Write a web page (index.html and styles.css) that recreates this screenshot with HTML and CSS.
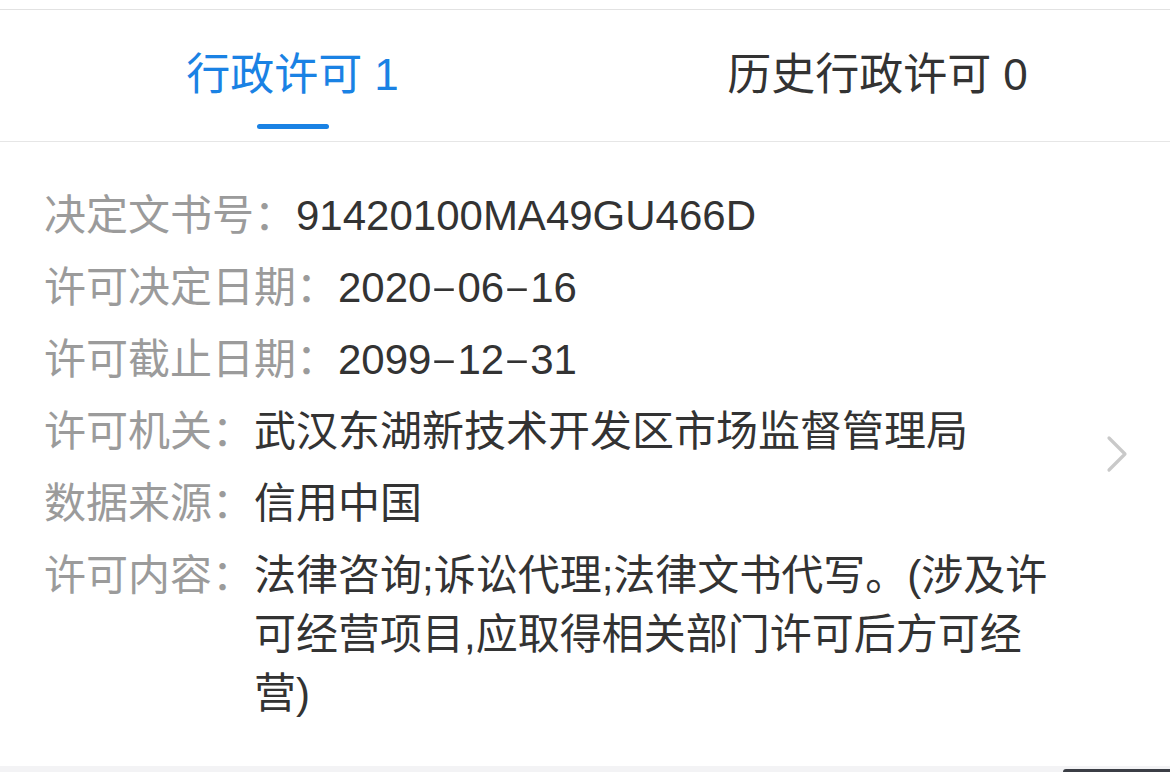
FILE: index.html
```html
<!DOCTYPE html>
<html lang="zh-CN">
<head>
<meta charset="utf-8">
<title>行政许可</title>
<link rel="stylesheet" href="styles.css">
</head>
<body>
<div class="page">
  <div class="top-gap"></div>
  <div class="tabs">
    <div class="tab tab-active">
      <span class="tab-text">行政许可 1</span>
      <span class="tab-bar"></span>
    </div>
    <div class="tab">
      <span class="tab-text">历史行政许可 0</span>
      <span class="tab-bar tab-bar-hidden"></span>
    </div>
  </div>
  <div class="detail">
    <div class="rows">
      <div class="row"><span class="label">决定文书号：</span><span class="value">91420100MA49GU466D</span></div>
      <div class="row"><span class="label">许可决定日期：</span><span class="value">2020<span class="dash">-</span>06<span class="dash">-</span>16</span></div>
      <div class="row"><span class="label">许可截止日期：</span><span class="value">2099<span class="dash">-</span>12<span class="dash">-</span>31</span></div>
      <div class="row"><span class="label">许可机关：</span><span class="value">武汉东湖新技术开发区市场监督管理局</span></div>
      <div class="row"><span class="label">数据来源：</span><span class="value">信用中国</span></div>
      <div class="row"><span class="label">许可内容：</span><span class="value">法律咨询;诉讼代理;法律文书代写。(涉及许可经营项目,应取得相关部门许可后方可经营)</span></div>
    </div>
    <div class="chevron">
      <svg width="22" height="38" viewBox="0 0 22 38"><path d="M3 3 L19 19 L3 35" fill="none" stroke="#c9c9c9" stroke-width="3.2" stroke-linecap="round" stroke-linejoin="round"/></svg>
    </div>
  </div>
  <div class="footer-gap"></div>
  <div class="corner-bar"></div>
</div>
</body>
</html>
```

FILE: styles.css
```css
html, body {
  margin: 0;
  padding: 0;
  background: #ffffff;
}
.page {
  position: relative;
  width: 1170px;
  height: 772px;
  overflow: hidden;
  font-family: "Liberation Sans", "Noto Sans CJK SC", sans-serif;
  background: #ffffff;
}
.top-gap {
  height: 9px;
  border-bottom: 1px solid #e2e2e2;
}
.tabs {
  display: flex;
  height: 131px;
  border-bottom: 1px solid #e6e6e6;
}
.tab {
  flex: 1;
  display: flex;
  flex-direction: column;
  align-items: center;
  padding-top: 35px;
  box-sizing: border-box;
}
.tab-text {
  font-size: 44px;
  line-height: 60px;
  color: #333333;
}
.tab-active .tab-text {
  color: #1a82e4;
}
.tab-bar {
  display: block;
  width: 72px;
  height: 5px;
  margin-top: 19px;
  border-radius: 3px;
  background: #1a82e4;
}
.tab-bar-hidden {
  background: transparent;
}
.detail {
  display: flex;
  align-items: center;
  padding: 43px 42px 43px 44px;
  height: 624px;
  box-sizing: border-box;
}
.rows {
  flex: 1;
  display: flex;
  flex-direction: column;
  gap: 13px;
}
.row {
  display: flex;
  font-size: 42px;
  line-height: 59px;
}
.label {
  flex-shrink: 0;
  white-space: nowrap;
  color: #9b9b9b;
}
.value {
  flex: 1;
  color: #333333;
}
.dash {
  display: inline-block;
  width: 26px;
  text-align: center;
  transform: scaleX(1.9) scaleY(0.8);
}
.chevron {
  width: 22px;
  height: 38px;
  margin-left: 54px;
  flex-shrink: 0;
}
.chevron svg {
  display: block;
}
.footer-gap {
  height: 6px;
  background: #f3f3f5;
}
.corner-bar {
  position: absolute;
  right: 0;
  bottom: 0;
  width: 107px;
  height: 3px;
  background: #3b3e45;
  border-top-left-radius: 6px;
}
```
